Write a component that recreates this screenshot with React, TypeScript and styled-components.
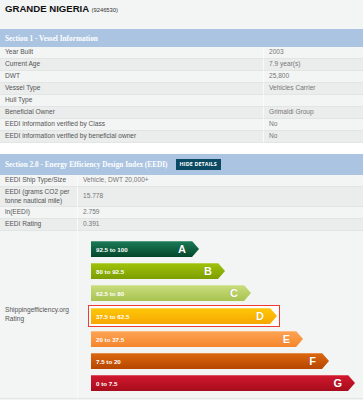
import * as React from 'react'
import styled, {createGlobalStyle} from 'styled-components'

const GlobalStyle = createGlobalStyle`
  html, body {
    margin: 0;
    padding: 0;
    background: #f3f4f4;
    font-family: "Liberation Sans", Arial, sans-serif;
  }
  * {
    box-sizing: border-box;
  }
`

const Page = styled.div`
  width: 363px;
  display: flex;
  flex-direction: column;
`

const TitleBar = styled.div`
  height: 29px;
  padding: 3px 5px 0;
  background: #f3f4f4;
  h1 {
    margin: 0;
    font-size: 9.6px;
    font-weight: bold;
    color: #111;
    span {
      font-size: 5.8px;
      font-weight: normal;
      color: #333;
    }
  }
`

const SectionHeader = styled.div<{ tall?: boolean }>`
  height: ${p => p.tall ? 21 : 18}px;
  background: #aac4e1;
  display: flex;
  align-items: center;
  padding: 0 5px;
  gap: 8px;
  color: #fff;
  font-family: "Liberation Serif", "Times New Roman", serif;
  font-weight: bold;
  font-size: 7.3px;
`

const HideButton = styled.span`
  background: #0c4a63;
  color: #fff;
  font-family: "Open Sans", "Liberation Sans", sans-serif;
  font-weight: bold;
  font-size: 5.4px;
  letter-spacing: 0.1px;
  padding: 0 4px;
  height: 11px;
  line-height: 11px;
`

const Gap = styled.div`
  height: 11px;
  background: #fff;
`

const Table = styled.div<{ labelWidth: number }>`
  display: grid;
  grid-template-columns: ${p => p.labelWidth}px 1fr;
`

const Row = styled.div<{ shade?: boolean }>`
  display: contents;
  > div {
    background: ${p => p.shade ? '#ebecec' : '#f3f4f4'};
    border-bottom: 1px solid #e3e4e4;
  }
`

const Cell = styled.div`
  min-height: 12px;
  padding: 1px 5px;
  font-size: 6.6px;
  line-height: 8.5px;
  display: flex;
  align-items: center;
`

const Label = styled(Cell)`
  color: #555;
`

const Value = styled(Cell)`
  color: #777;
  border-left: 1px solid #fafafa;
`

const RatingCell = styled.div`
  padding: 7px 0 4px 10px;
  display: flex;
  flex-direction: column;
  border-left: 1px solid #fafafa;
`

const Slot = styled.div<{ active?: boolean }>`
  align-self: flex-start;
  padding: 2px;
  border: 1px solid ${p => p.active ? '#ee3b33' : 'transparent'};
  background: ${p => p.active ? '#fff' : 'transparent'};
  margin: ${p => p.active ? '1px 0 1px' : '0'};
`

const Bar = styled.div<{ top: string; bottom: string }>`
  height: 16px;
  display: flex;
  align-items: center;
  justify-content: space-between;
  padding: 0 13px 0 5px;
  color: #fff;
  background: linear-gradient(${p => p.top}, ${p => p.bottom});
  clip-path: polygon(0 0, calc(100% - 7px) 0, 100% 50%, calc(100% - 7px) 100%, 0 100%);
  box-shadow: inset 0 1px 0 rgba(255, 255, 255, 0.25);
  b {
    font-size: 6.2px;
  }
  strong {
    font-size: 11px;
    text-shadow: 0 0 1px rgba(0, 0, 0, 0.2);
  }
`

const vessel = [
  ['Year Built', '2003'],
  ['Current Age', '7.9 year(s)'],
  ['DWT', '25,800'],
  ['Vessel Type', 'Vehicles Carrier'],
  ['Hull Type', ''],
  ['Beneficial Owner', 'Grimaldi Group'],
  ['EEDI information verified by Class', 'No'],
  ['EEDI information verified by beneficial owner', 'No'],
]

const eedi = [
  ['EEDI Ship Type/Size', 'Vehicle, DWT 20,000+'],
  ['EEDI (grams CO2 per tonne nautical mile)', '15.778'],
  ['ln(EEDI)', '2.759'],
  ['EEDI Rating', '0.391'],
]

const bands = [
  {range: '92.5 to 100', letter: 'A', top: '#1b7d58', bottom: '#04452c'},
  {range: '80 to 92.5', letter: 'B', top: '#a0c40a', bottom: '#7c9d00'},
  {range: '62.5 to 80', letter: 'C', top: '#c9dd7e', bottom: '#a8c350'},
  {range: '37.5 to 62.5', letter: 'D', top: '#ffc80a', bottom: '#f6a700'},
  {range: '20 to 37.5', letter: 'E', top: '#ffa455', bottom: '#f4862c'},
  {range: '7.5 to 20', letter: 'F', top: '#dc6810', bottom: '#b64600'},
  {range: '0 to 7.5', letter: 'G', top: '#d3182f', bottom: '#a60d1c'},
]

export default function App() {
  const current = 'D'
  return (
    <Page>
      <GlobalStyle/>
      <TitleBar>
        <h1>GRANDE NIGERIA <span>(9246530)</span></h1>
      </TitleBar>

      <SectionHeader>Section 1 - Vessel Information</SectionHeader>
      <Table labelWidth={263}>
        {vessel.map(([k, v], i) => (
          <Row key={k} shade={i % 2 === 1}>
            <Label>{k}</Label>
            <Value>{v}</Value>
          </Row>
        ))}
      </Table>

      <Gap/>

      <SectionHeader tall>
        Section 2.0 - Energy Efficiency Design Index (EEDI)
        <HideButton>HIDE DETAILS</HideButton>
      </SectionHeader>
      <Table labelWidth={77}>
        {eedi.map(([k, v], i) => (
          <Row key={k} shade={i % 2 === 1}>
            <Label>{k}</Label>
            <Value>{v}</Value>
          </Row>
        ))}
        <Row>
          <Label>Shippingefficiency.org Rating</Label>
          <RatingCell>
            {bands.map((b, i) => (
              <Slot key={b.letter} active={b.letter === current}>
                <Bar top={b.top} bottom={b.bottom} style={{width: 108 + i * 26}}>
                  <b>{b.range}</b>
                  <strong>{b.letter}</strong>
                </Bar>
              </Slot>
            ))}
          </RatingCell>
        </Row>
      </Table>
    </Page>
  )
}
